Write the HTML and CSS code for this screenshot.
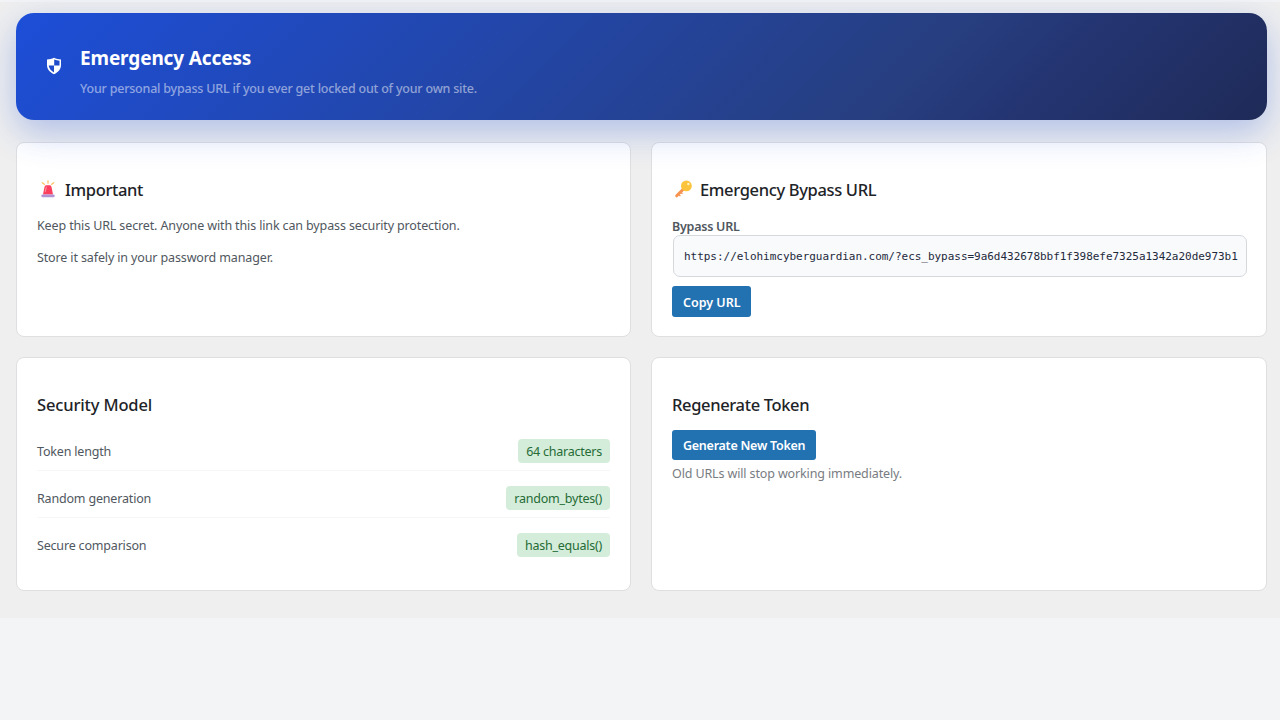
FILE: index.html
```
<!DOCTYPE html>
<html lang="en">

<head>
    <meta charset="UTF-8">
    <title>Emergency Access</title>
    <link rel="stylesheet" href="styles.css">
</head>

<body>
    <div class="wrap">
        <header class="hero">
            <svg class="hero-icon" width="16" height="18" viewBox="0 0 16 18">
                <path d="M8 .8C10.200 2 12.600 2.500 15 2.500V8c0 4.200-2.800 7.300-7 9.200C3.800 15.300 1 12.200 1 8V2.500C3.400 2.500 5.800 2 8 .8z" fill="#fff"/>
                <path d="M8.200 2.600c1.700.7 3.400 1.100 5.300 1.200V8.600H8.200z" fill="#1f4ccb"/>
                <path d="M2.700 8.600H8v6.800C5 13.900 3 11.600 2.700 8.600z" fill="#1f4ccb"/>
            </svg>
            <div class="hero-text">
                <h1>Emergency Access</h1>
                <p>Your personal bypass URL if you ever get locked out of your own site.</p>
            </div>
        </header>

        <main class="grid">
            <section class="card">
                <h2>
                    <svg class="card-icon" width="22" height="20" viewBox="0 0 22 20">
                        <g stroke="#fbc564" stroke-width="1.300" stroke-linecap="round">
                            <path d="M11 2v2.200M5.300 3.700l2 1.600M16.700 3.700l-2 1.600"/>
                        </g>
                        <path d="M6 15.500l1.500-7.500c.3-1.300 1-1.800 2-1.800h3c1 0 1.700.5 2 1.800l1.500 7.500z" fill="#fb3f5c"/>
                        <path d="M8.300 12.500l1-4.300" stroke="#ff8b96" stroke-width="1.200" stroke-linecap="round"/>
                        <rect x="4.500" y="15.500" width="13" height="2.800" rx=".8" fill="#b193d3"/>
                    </svg>
                    <span>Important</span>
                </h2>
                <p>Keep this URL secret. Anyone with this link can bypass security protection.</p>
                <p>Store it safely in your password manager.</p>
            </section>

            <section class="card">
                <h2>
                    <svg class="card-icon" width="22" height="20" viewBox="0 0 22 20">
                        <path d="M12 9.500L4.700 16.800" stroke="#f79350" stroke-width="3" stroke-linecap="round"/>
                        <path d="M6.800 15.800l1.600 1.200M9 13.500l1.500 1.200" stroke="#f79350" stroke-width="1.300"/>
                        <circle cx="14.400" cy="6.900" r="5.400" fill="#fcc33c"/>
                        <circle cx="16.400" cy="5" r="1.300" fill="#fff1bd"/>
                    </svg>
                    <span>Emergency Bypass URL</span>
                </h2>
                <label class="field-label" for="bypassUrl">Bypass URL</label>
                <input class="url-input" id="bypassUrl" type="text" readonly value="https://elohimcyberguardian.com/?ecs_bypass=9a6d432678bbf1f398efe7325a1342a20de973b1">
                <button class="btn btn-copy" type="button">Copy URL</button>
            </section>

            <section class="card">
                <h2 class="wide">Security Model</h2>
                <div class="rows">
                    <div class="row"><span>Token length</span><span class="badge">64 characters</span></div>
                    <div class="row"><span>Random generation</span><span class="badge">random_bytes()</span></div>
                    <div class="row"><span>Secure comparison</span><span class="badge">hash_equals()</span></div>
                </div>
            </section>

            <section class="card">
                <h2>Regenerate Token</h2>
                <button class="btn btn-new" type="button">Generate New Token</button>
                <p class="note">Old URLs will stop working immediately.</p>
            </section>
        </main>
    </div>
</body>

</html>
```

FILE: styles.css
```
* {
    box-sizing: border-box;
    margin: 0;
    padding: 0;
}

body {
    background: #f3f4f6;
    padding-top: 2px;
    font-family: "Noto Sans", sans-serif;
    font-size: 12.500px;
    letter-spacing: -.13px;
    color: #50575e;
}

.wrap {
    height: 616px;
    padding: 11px 13px 0 16px;
    background: #efefef;
}

.hero {
    position: relative;
    z-index: 1;
    display: flex;
    height: 107px;
    padding: 32px 30px 0;
    border-radius: 18px;
    background: linear-gradient(135deg, #1d4ed8 0%, #273f80 70%, #243573 80%, #1e2a57 100%);
    box-shadow: 0 12px 35px rgba(29, 78, 216, .3);
}

.hero-icon {
    margin: 12px 18px 0 0;
}

.hero h1 {
    font-size: 19px;
    line-height: 27px;
    font-weight: 700;
    color: #fff;
}

.hero p {
    margin-top: 8px;
    line-height: 18px;
    font-weight: 500;
    letter-spacing: -.21px;
    color: rgba(255, 255, 255, .5);
}

.grid {
    display: grid;
    grid-template-columns: 615px 616px;
    grid-template-rows: 195px 234px;
    gap: 20px;
    margin-top: 22px;
}

.card {
    padding: 34px 20px 0;
    border: 1px solid #dfdfe1;
    border-radius: 8px;
    background: #fff;
}

.card h2 {
    display: flex;
    align-items: center;
    height: 24px;
    font-size: 16.500px;
    font-weight: 500;
    letter-spacing: -.35px;
    color: #1d2327;
}

.card .wide {
    letter-spacing: -.15px;
}

.card-icon {
    margin-right: 6px;
}

.card p {
    margin-top: 14px;
    line-height: 18px;
}

.card h2 + p {
    margin-top: 16px;
}

.field-label {
    display: block;
    margin-top: 18px;
    line-height: 16px;
    font-weight: 600;
    letter-spacing: -.25px;
}

.url-input {
    display: block;
    width: 574px;
    height: 42px;
    margin-left: 1px;
    padding: 0 8px 0 10px;
    border: 1px solid #d5d9de;
    border-radius: 7px;
    background: #f8fafc;
    font-family: "DejaVu Sans Mono", monospace;
    font-size: 11px;
    letter-spacing: -.03px;
    color: #1e293b;
}

.btn {
    display: block;
    height: 30px;
    padding: 0 11px;
    border: 0;
    border-radius: 3px;
    background: #2271b1;
    font-family: inherit;
    font-size: 12.500px;
    font-weight: 600;
    letter-spacing: -.26px;
    color: #fff;
}

.btn-copy {
    height: 31px;
    margin-top: 9px;
    padding: 1px 10px 0 11px;
    letter-spacing: 0;
}

.rows {
    padding-top: 8px;
}

.row {
    display: flex;
    align-items: center;
    justify-content: space-between;
    height: 47px;
    padding-top: 8px;
    border-bottom: 1px solid #f6f7f7;
    letter-spacing: -.18px;
}

.row:last-child {
    height: 46px;
    border-bottom: 0;
}

.badge {
    height: 24px;
    padding: 0 8px;
    border-radius: 4px;
    background: #d4edda;
    line-height: 25px;
    letter-spacing: -.24px;
    color: #246b36;
}

.btn-new {
    margin-top: 14px;
}

.card .note {
    margin-top: 5px;
    color: #787c82;
}
```
